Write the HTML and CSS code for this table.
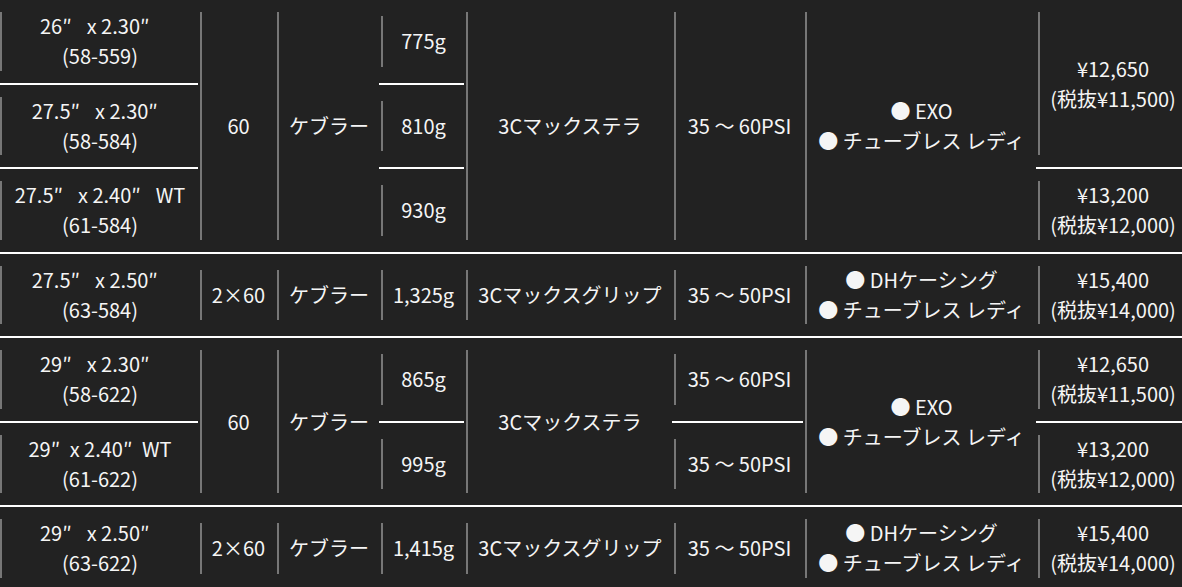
FILE: index.html
```html
<!DOCTYPE html>
<html lang="ja">
<head>
<meta charset="utf-8">
<title>Spec</title>
<link rel="stylesheet" href="styles.css">
</head>
<body>
<div class="spec">
  <div class="grp rows3">
    <div class="cell first bb"><div class="in"><span>26<i class="fw">″</i> x 2.30<i class="fw">″</i></span><span>(58-559)</span></div></div>
    <div class="cell r3"><div class="in"><span>60</span></div></div>
    <div class="cell r3"><div class="in"><span>ケブラー</span></div></div>
    <div class="cell s bb"><div class="in"><span>775g</span></div></div>
    <div class="cell r3"><div class="in"><span>3Cマックステラ</span></div></div>
    <div class="cell r3"><div class="in"><span>35 ～ 60PSI</span></div></div>
    <div class="cell r3"><div class="in"><span>● EXO</span><span>● チューブレス レディ</span></div></div>
    <div class="cell r2 bb pr"><div class="in"><span>¥12,650</span><span>(税抜¥11,500)</span></div></div>
    <div class="cell first bb"><div class="in"><span>27.5<i class="fw">″</i> x 2.30<i class="fw">″</i></span><span>(58-584)</span></div></div>
    <div class="cell s bb"><div class="in"><span>810g</span></div></div>
    <div class="cell first"><div class="in"><span>27.5<i class="fw">″</i> x 2.40<i class="fw">″</i> WT</span><span>(61-584)</span></div></div>
    <div class="cell s"><div class="in"><span>930g</span></div></div>
    <div class="cell pr"><div class="in"><span>¥13,200</span><span>(税抜¥12,000)</span></div></div>
  </div>

  <div class="grp rows1">
    <div class="cell first"><div class="in"><span>27.5<i class="fw">″</i> x 2.50<i class="fw">″</i></span><span>(63-584)</span></div></div>
    <div class="cell s"><div class="in"><span>2×60</span></div></div>
    <div class="cell s"><div class="in"><span>ケブラー</span></div></div>
    <div class="cell s"><div class="in"><span>1,325g</span></div></div>
    <div class="cell s"><div class="in"><span>3Cマックスグリップ</span></div></div>
    <div class="cell s"><div class="in"><span>35 ～ 50PSI</span></div></div>
    <div class="cell"><div class="in"><span>● DHケーシング</span><span>● チューブレス レディ</span></div></div>
    <div class="cell pr"><div class="in"><span>¥15,400</span><span>(税抜¥14,000)</span></div></div>
  </div>

  <div class="grp rows2">
    <div class="cell first bb"><div class="in"><span>29<i class="fw">″</i> x 2.30<i class="fw">″</i></span><span>(58-622)</span></div></div>
    <div class="cell r2"><div class="in"><span>60</span></div></div>
    <div class="cell r2"><div class="in"><span>ケブラー</span></div></div>
    <div class="cell s bb"><div class="in"><span>865g</span></div></div>
    <div class="cell r2"><div class="in"><span>3Cマックステラ</span></div></div>
    <div class="cell s bb"><div class="in"><span>35 ～ 60PSI</span></div></div>
    <div class="cell r2"><div class="in"><span>● EXO</span><span>● チューブレス レディ</span></div></div>
    <div class="cell bb pr"><div class="in"><span>¥12,650</span><span>(税抜¥11,500)</span></div></div>
    <div class="cell first"><div class="in"><span>29<i class="pq">″</i> x 2.40<i class="pq">″</i> WT</span><span>(61-622)</span></div></div>
    <div class="cell s"><div class="in"><span>995g</span></div></div>
    <div class="cell s"><div class="in"><span>35 ～ 50PSI</span></div></div>
    <div class="cell pr"><div class="in"><span>¥13,200</span><span>(税抜¥12,000)</span></div></div>
  </div>

  <div class="grp rows1">
    <div class="cell first"><div class="in"><span>29<i class="fw">″</i> x 2.50<i class="fw">″</i></span><span>(63-622)</span></div></div>
    <div class="cell s"><div class="in"><span>2×60</span></div></div>
    <div class="cell s"><div class="in"><span>ケブラー</span></div></div>
    <div class="cell s"><div class="in"><span>1,415g</span></div></div>
    <div class="cell s"><div class="in"><span>3Cマックスグリップ</span></div></div>
    <div class="cell s"><div class="in"><span>35 ～ 50PSI</span></div></div>
    <div class="cell"><div class="in"><span>● DHケーシング</span><span>● チューブレス レディ</span></div></div>
    <div class="cell pr"><div class="in"><span>¥15,400</span><span>(税抜¥14,000)</span></div></div>
  </div>
</div>
</body>
</html>
```

FILE: styles.css
```css
html, body {
  margin: 0;
  padding: 0;
  background: #222222;
  overflow: hidden;
}
body {
  font-family: "Noto Sans CJK JP", "Noto Sans", sans-serif;
  font-size: 20px;
  line-height: 30px;
  color: #f5f5f5;
}
.spec {
  width: 1182px;
}
.grp {
  display: grid;
  grid-template-columns: 198px 77px 104px 85px 208px 131px 233px 146px;
  border-bottom: 2px solid #ffffff;
}
.rows3 { grid-template-rows: 84.5px 84.5px 82.5px; }
.rows2 { grid-template-rows: 84.5px 82.5px; }
.rows1 { grid-template-rows: 82.5px; }
.cell {
  display: flex;
  box-sizing: border-box;
  min-width: 0;
  padding: 12px 0 12px 2px;
}
.cell.first { padding-left: 0; }
.cell.s { padding-top: 16px; padding-bottom: 16px; }
.cell.bb { border-bottom: 2px solid #ffffff; }
.r2 { grid-row: span 2; }
.r3 { grid-row: span 3; }
.in {
  flex: 1;
  border-left: 2px solid #777777;
  display: flex;
  flex-direction: column;
  justify-content: center;
  align-items: center;
  text-align: center;
  white-space: nowrap;
}
.pr .in { padding-left: 4px; }
.fw {
  font-style: normal;
  display: inline-block;
  width: 1em;
  text-align: left;
}
.pq {
  font-style: normal;
  margin-right: 5px;
}
```
